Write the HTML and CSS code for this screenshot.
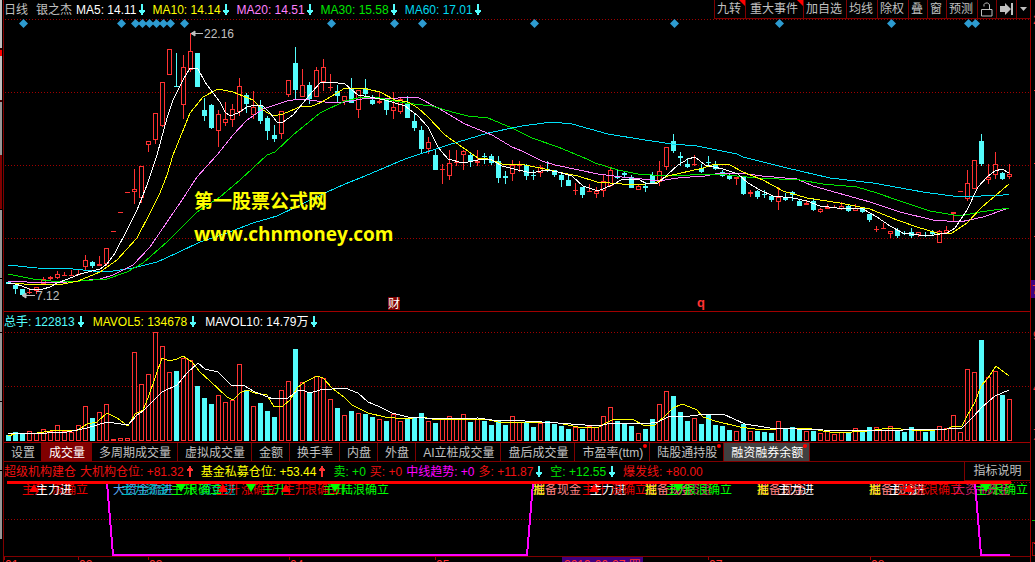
FILE: index.html
```html
<!DOCTYPE html>
<html lang="zh-CN">
<head>
<meta charset="utf-8">
<title>银之杰 日线</title>
<link rel="stylesheet" href="styles.css">
</head>
<body>
<svg class="defs" width="0" height="0" aria-hidden="true">
  <symbol id="down" viewBox="0 0 6 11"><path fill="#54fcfc" d="M2 0h2v6h2v2H5v1H4v2H2V9H1V8H0V6h2z"/></symbol>
  <symbol id="up" viewBox="0 0 6 11"><path fill="#ff3232" d="M2 0h2v2h1v1h1v2H4v6H2V5H0V3h1V2h1z"/></symbol>
</svg>
<div class="terminal">
  <aside class="scroll-edge"></aside>
  <main class="panels">
    <header class="row top">
      <div class="legend">
        <span class="grey">日线</span><span class="grey name">银之杰</span>
        <span class="item white">MA5: 14.11<svg class="arrow"><use href="#down"/></svg></span>
        <span class="item yellow">MA10: 14.14<svg class="arrow"><use href="#down"/></svg></span>
        <span class="item pink">MA20: 14.51<svg class="arrow"><use href="#down"/></svg></span>
        <span class="item green">MA30: 15.58<svg class="arrow"><use href="#down"/></svg></span>
        <span class="item cyan">MA60: 17.01<svg class="arrow"><use href="#down"/></svg></span>
      </div>
      <nav class="toolbar">
        <button class="flag">九转</button><button class="flag wide">重大事件</button><button>加自选</button><button>均线</button><button>除权</button><button>叠</button><button>窗</button><button>预测</button>
        <button class="icon" aria-label="锁定"><svg width="12" height="15"><path fill="none" stroke="#c0c0c0" d="M.5 7.500h10.500v6.500H.5zM3 4.500V2.500l1.500-1.500h2l2 1.500v5"/></svg></button>
        <button class="icon" aria-label="移到末尾"><svg width="13" height="12"><path fill="#c0c0c0" d="M0 3h5V0l6 6-6 6V9H0zM11 0h2v12h-2z"/></svg></button>
        <button class="icon small" aria-label="更多"><svg width="7" height="4"><path fill="#c0c0c0" d="M0 0h7L3.500 4z"/></svg></button>
      </nav>
    </header>
    <svg class="chart price" id="price"></svg>
    <section class="volume">
      <div class="row legend loose">
        <span class="item aqua">总手: 122813<svg class="arrow"><use href="#down"/></svg></span>
        <span class="item yellow">MAVOL5: 134678<svg class="arrow"><use href="#down"/></svg></span>
        <span class="item white">MAVOL10: 14.79万<svg class="arrow"><use href="#down"/></svg></span>
      </div>
      <svg class="chart bars" id="volume"></svg>
    </section>
    <nav class="tabs">
      <button>设置</button><button class="active">成交量</button><button>多周期成交量</button><button>虚拟成交量</button><button>金额</button><button>换手率</button><button>内盘</button><button>外盘</button><button>AI立桩成交量</button><button>盘后成交量</button><button class="dot">市盈率(ttm)</button><button class="dot">陆股通持股</button><button class="chosen dot">融资融券余额</button>
    </nav>
    <div class="row indicator">
      <div class="readings">
        <span class="red">超级机构建仓</span>
        <span class="red">大机构仓位: +81.32<svg class="arrow"><use href="#up"/></svg></span>
        <span class="yellow after">基金私募仓位: +53.44<svg class="arrow"><use href="#up"/></svg></span>
        <span class="green after">卖: +0</span>
        <span class="red">买: +0</span>
        <span class="magenta">中线趋势: +0</span>
        <span class="red">多: +11.87<svg class="arrow"><use href="#down"/></svg></span>
        <span class="green after">空: +12.55<svg class="arrow"><use href="#down"/></svg></span>
        <span class="red after">爆发线: +80.00</span>
      </div>
      <button class="explain">指标说明</button>
    </div>
    <svg class="chart signal" id="signal"></svg>
    <svg class="chart dates" id="dates"></svg>
  </main>
  <svg class="scale" id="scale"></svg>
</div>
<script src="chart.js"></script>
</body>
</html>
```

FILE: styles.css
```css
* { box-sizing: border-box; }
body {
  margin: 0;
  background: #000;
  color: #c0c0c0;
  font: 12px/18px "Liberation Sans", "Noto Sans CJK SC", sans-serif;
  overflow: hidden;
}
.defs { position: absolute; }
.terminal {
  display: grid;
  grid-template-columns: 3px minmax(0, 1fr) 4px;
  height: 100vh;
  overflow: hidden;
}
.scroll-edge {
  width: 2px;
  background: linear-gradient(#c0c0c0 48px, #300 48px 50px, #f00 50px 56px, #c0c0c0 56px 100px,
    #400 100px 102px, #989898 102px 155px, #800000 155px 209px, #000 209px 210px,
    #989898 210px 278px, #000 278px 279px, #989898 279px 332px, #000 332px 333px,
    #989898 333px 401px, #000 401px 402px, #989898 402px 470px, #000 470px 471px,
    #989898 471px 539px, #000 539px);
}
.panels {
  display: flex;
  flex-direction: column;
  border-left: 1px solid #800000;
  border-right: 1px solid #a00000;
  overflow: hidden;
}
.row { display: flex; height: 19px; flex: none; white-space: nowrap; }
.top { justify-content: space-between; }
.legend { display: flex; align-items: center; overflow: hidden; }
.name { margin: 0 4px 0 8px; }
.item { margin-right: 8px; }
.loose .item { margin-right: 9px; }
.arrow { width: 6px; height: 11px; margin-left: 2px; vertical-align: -1px; }
.loose .arrow, .readings .arrow { margin-left: 3px; }
.grey { color: #c0c0c0; }
.white { color: #fff; }
.yellow { color: #ff0; }
.pink { color: #ff80ff; }
.green { color: #00e600; }
.cyan { color: #00d8f0; }
.aqua { color: #54fcfc; }
.red { color: #f01010; }
.magenta { color: #f0f; }

button {
  margin: 0;
  padding: 0;
  border: 0;
  background: none;
  color: #c0c0c0;
  font: inherit;
  white-space: nowrap;
}
.toolbar { display: flex; flex: none; border-bottom: 1px solid #800000; }
.toolbar button {
  position: relative;
  display: flex;
  align-items: center;
  padding: 0 4px 0 2px;
  border-left: 1px solid #800000;
}
.toolbar .wide { padding: 0 5px 0 4px; }
.toolbar .icon { padding: 0 3px; }
.toolbar .flag::after {
  content: "";
  position: absolute;
  top: 0;
  right: 0;
  border: 3px solid transparent;
  border-top-color: #f00;
  border-right-color: #f00;
}

.chart { display: block; width: 100%; flex: none; }
.price { height: 292px; }
.bars { height: 111px; }
.signal { height: 75px; }
.dates { height: 6px; border-top: 1px solid #800000; }
.volume { border-top: 1px solid #a00000; }
.scale { width: 4px; height: 100%; }

.tabs {
  display: flex;
  flex: none;
  height: 20px;
  border-top: 1px solid #a00000;
  border-bottom: 1px solid #800000;
}
.tabs button {
  position: relative;
  padding: 1px 6px 0 7px;
  border-right: 1px solid #800000;
}
.tabs .active { background: #800000; color: #fff; }
.tabs .chosen { background: #404040; color: #fff; }
.tabs .dot::after {
  content: "";
  position: absolute;
  top: 1px;
  right: 2px;
  width: 4px;
  height: 4px;
  border-radius: 2px;
  background: #f00;
}
.indicator { justify-content: space-between; }
.readings { display: flex; align-items: center; gap: 4px; overflow: hidden; }
.readings .after { margin-left: 4px; }
.explain {
  flex: none;
  width: 66px;
  border-left: 1px solid #800000;
  border-bottom: 1px solid #800000;
}

.candles, .lines { shape-rendering: crispEdges; }
.lines polyline { fill: none; }
.watermark { font-weight: 700; font-size: 19px; }
.watermark-url { font-family: "Open Sans", sans-serif; font-weight: 700; font-size: 19px; }
.mark { font-weight: 700; font-size: 13px; }
```

FILE: chart.js
```js
const NS = 'http://www.w3.org/2000/svg';
const UP = '#ff3232', DOWN = '#54fcfc', RULE = '#a00000';

function add(parent, tag, attrs, text) {
  const el = document.createElementNS(NS, tag);
  for (const k in attrs) el.setAttribute(k, attrs[k]);
  if (text) el.textContent = text;
  parent.appendChild(el);
  return el;
}
function panel(id, left, top) {
  return add(document.getElementById(id), 'g', { transform: `translate(${-left} ${-top})` });
}
function rect(g, x, y, w, h, fill) { add(g, 'rect', { x, y, width: w, height: h, fill }); }
function hollow(g, x, y, w, h, color) {
  add(g, 'rect', { x: x + 0.5, y: y + 0.5, width: w - 1, height: h - 1, fill: '#000', stroke: color });
}
function rule(g, y, from = 5, to = 3000) {
  add(g, 'line', { x1: from, x2: to, y1: y + 0.5, y2: y + 0.5, stroke: RULE, 'stroke-dasharray': '1 2' });
}
function line(g, points, stroke, width = 1) { add(g, 'polyline', { points, stroke, 'stroke-width': width }); }
function label(g, x, y, text, fill, cls = '') { add(g, 'text', { x, y, fill, class: cls }, text); }

// One entry per day: colour, high, body top, body bottom, low, top of volume bar
const days = `c 281 282 284 284 435;c 285 285 289 294 432;c 289 289 295 295 434;r 288 292 293 294 431;r 287 287 291 294 433
r 277 279 284 285 429;r 276 277 279 281 431;r 271 274 278 279 425;r 272 275 276 276 431;r 270 275 276 276 432
r 269 274 275 275 425;r 255 260 267 270 406;c 261 262 266 268 418;r 256 264 266 266 412;r 248 248 264 266 404
r 231 231 232 232 439;r 212 212 213 213 438;r 192 192 193 193 438;r 169 189 192 204 352;r 166 166 198 203 384
r 141 141 145 152 374;r 113 113 140 144 332;r 82 82 126 127 346;r 49 49 75 75 372;c 53 86 87 87 371
r 55 67 105 119 358;r 33 51 70 72 360;c 53 53 87 87 386;c 98 110 116 121 398;c 104 105 128 129 404
r 110 114 131 147 395;r 102 119 123 126 402;r 104 109 120 127 400;r 78 86 112 116 364;c 93 95 104 113 390
r 91 107 115 119 406;c 100 105 121 124 403;c 116 118 131 140 411;c 125 135 139 142 417;r 111 111 134 139 390
r 80 80 95 97 381;c 47 63 90 99 349;r 69 85 97 97 382;c 82 85 99 104 393;r 67 70 97 97 376
r 59 67 82 91 378;r 74 87 88 91 399;c 85 91 96 102 408;r 96 96 101 105 415;c 78 88 103 103 411
r 90 90 110 118 413;c 79 88 94 97 414;c 95 100 104 105 417;r 92 101 103 104 419;c 98 98 110 115 421
r 92 107 111 119 414;r 97 99 112 114 421;c 96 103 118 118 419;c 113 121 128 131 417;c 126 130 149 153 413
r 137 142 149 154 421;c 150 155 170 170 423;r 164 169 170 184 418;r 150 163 176 180 416;r 150 162 163 166 419
r 150 151 155 170 414;c 152 155 162 167 422;r 150 161 163 166 419;c 153 156 157 164 421;c 154 156 163 165 425
c 156 161 178 183 421;c 171 176 178 184 425;r 160 165 174 181 416;r 161 165 166 172 422;c 164 165 176 180 422
c 170 175 176 180 427;r 165 167 173 177 423;c 161 169 170 172 421;c 170 170 175 177 424;c 173 175 180 187 426
c 176 180 186 186 429;r 183 190 191 195 427;c 187 187 195 198 429;r 184 191 192 192 426;r 187 191 194 198 427
r 174 181 191 197 416;r 168 170 186 187 407;c 170 177 178 179 421;c 171 173 175 177 424;c 175 177 188 188 426
r 184 186 190 190 433;c 182 186 188 192 429;c 172 175 184 184 419;r 161 171 182 186 404;r 147 147 167 170 391
c 134 141 151 153 396;c 152 156 158 166 412;c 158 164 167 168 421;r 155 164 165 166 418;c 164 168 172 173 424
c 156 162 163 166 415;c 161 164 169 170 425;c 170 172 176 177 426;c 174 175 179 180 430;r 177 177 179 185 431
c 177 177 194 195 424;r 190 192 194 197 431;c 190 191 197 199 431;c 190 194 195 198 432;c 195 196 200 202 433
r 187 197 202 210 421;c 193 198 200 201 429;c 191 192 195 201 427;c 200 201 206 206 429;r 200 203 205 205 431
c 199 201 210 211 431;r 208 209 212 213 433;r 204 207 209 209 431;r 205 207 208 208 434;r 202 206 209 210 432
c 205 206 211 212 432;r 204 208 211 211 428;c 207 207 212 213 432;c 214 214 220 222 427;r 226 229 230 232 427
r 223 228 229 229 430;r 231 231 234 238 426;c 228 230 236 238 430;c 231 233 234 235 432;c 228 232 236 238 427
r 232 232 235 237 430;c 232 235 236 237 432;c 230 232 234 235 430;r 230 231 243 243 426;r 226 230 233 233 428
r 212 212 214 222 415;r 191 191 192 192 432;r 170 183 199 201 369;r 160 160 189 189 372;c 134 141 164 166 340
r 164 177 180 184 377;r 152 164 175 179 371;c 172 173 179 180 395;r 164 174 177 179 399`
  .split(/[;\n]/).map(s => s.trim().split(' ')).map(([k, ...n]) => [k, ...n.map(Number)]);
const dayX = i => 8 + 7 * i;

// Price panel
const price = panel('price', 4, 19);
let g = add(price, 'g', { class: 'candles' });
[19, 92, 165, 238].forEach(y => rule(g, y));
days.forEach(([kind, high, top, bottom, low], i) => {
  const x = dayX(i), color = kind === 'r' ? UP : DOWN;
  rect(g, x, high, 1, Math.max(1, low - high), color);
  if (kind === 'r' && bottom - top > 2) hollow(g, x - 2, top, 5, bottom - top, color);
  else rect(g, x - 2, top, 5, bottom - top, color);
});
// The bar on day 24 has a long wick above its close
rect(g, dayX(24), 53, 1, 34, DOWN);
[23, 121, 135, 142, 149, 156, 163, 170, 184, 331, 394, 422, 534, 674, 779, 891, 968, 975].forEach(x =>
  add(price, 'path', { d: `M${x + 0.5} 19l4.500 4.500-4.500 4.500-4.500-4.500z`, fill: '#2d9bd0' }));
g = add(price, 'g', { class: 'lines' });
line(g, '8,265 37,268 73,269 93,271 113,271 133,268 157,262 177,253 200,242 227,233 253,223 277,216 300,205 327,192 345,184 365,176 405,159 448,145 488,133 522,126 552,122 572,124 608,134 645,140 672,144 697,146 737,154 743,157 787,168 830,178 873,183 923,192 960,197 1003,195 1009,194', '#00e0f8');
line(g, '8,281 27,282 67,282 100,279 113,275 133,265 150,247 167,222 182,200 197,177 217,155 233,135 247,120 263,109 287,101 300,99 317,101 333,103 345,102 368,98 392,99 405,97 417,97 438,108 465,124 492,135 512,147 522,151 542,161 555,165 598,174 622,177 642,179 658,181 678,178 690,177 705,176 720,173 740,173 762,176 797,179 813,186 870,202 900,212 933,220 960,222 983,217 1009,208', '#ff80ff');
line(g, '8,274 33,279 60,282 80,281 107,279 127,272 143,263 167,242 197,212 220,197 240,180 267,155 275,152 293,135 320,113 345,101 362,97 380,98 405,103 432,106 452,112 468,116 488,118 512,128 532,138 558,147 587,159 595,163 618,170 638,174 665,176 690,175 717,174 757,178 800,180 823,184 857,187 877,193 897,200 930,211 960,216 980,212 1009,208', '#00e600');
line(g, '8,283 18,283 30,285 63,284 78,281 100,272 117,260 137,238 150,213 160,193 167,175 173,155 182,133 190,113 203,97 218,89 233,92 253,100 263,110 273,116 283,114 302,106 310,107 322,102 345,88 362,88 380,92 395,100 408,102 418,108 428,117 445,135 462,147 478,158 488,159 502,164 525,165 545,169 558,172 578,176 597,182 635,185 655,183 668,176 690,171 703,168 715,164 730,165 743,172 763,180 783,191 807,198 840,203 870,209 897,220 917,227 937,233 952,233 967,223 982,207 1009,184', '#ffff00');
line(g, '8,283 15,284 22,286 29,289 43,289 50,287 57,283 68,279 80,274 100,269 107,264 115,253 127,230 137,210 147,185 157,155 167,118 173,100 183,80 190,68 198,69 205,82 213,93 220,102 225,112 230,116 238,113 247,107 255,105 263,106 270,113 277,122 283,122 293,115 303,103 312,92 320,83 330,82 345,84 352,90 358,95 370,97 385,100 395,103 405,106 417,115 428,127 438,147 442,152 448,159 463,163 478,160 490,159 502,166 518,170 532,173 545,170 558,172 572,176 583,186 598,191 612,185 623,179 638,179 647,184 658,183 667,175 678,165 688,159 695,157 705,165 723,169 738,174 748,183 760,190 773,196 793,198 807,201 820,206 837,208 863,209 877,217 890,226 903,233 927,236 947,233 955,228 967,210 978,187 987,177 995,171 1002,169 1009,173', '#ffffff');
label(price, 194, 208, '第一股票公式网', '#ff0', 'watermark');
label(price, 194, 241, 'www.chnmoney.com', '#ff0', 'watermark-url');
add(price, 'path', { d: 'M191 33.500h12M195 31l-4 2.500 4 2.500zM22 295.500h13M26 293l-4 2.500 4 2.500z', stroke: '#c0c0c0', fill: '#c0c0c0' });
label(price, 204, 38, '22.16', '#c0c0c0');
label(price, 36, 300, '7.12', '#c0c0c0');
rect(price, 388, 297, 12, 13, '#800000');
label(price, 388, 308, '财', '#fff');
label(price, 697, 307, 'q', UP, 'mark');

// Volume panel
const volume = panel('volume', 4, 331);
g = add(volume, 'g', { class: 'candles' });
rule(g, 332);
rule(g, 386);
days.forEach(([kind, , , , , top], i) => {
  const x = dayX(i) - 2;
  if (kind === 'r') hollow(g, x, top, 5, 441 - top, UP);
  else rect(g, x, top, 5, 441 - top, DOWN);
});
g = add(volume, 'g', { class: 'lines' });
line(g, '8,436 15,434 37,433 57,430 78,430 87,424 97,422 107,413 117,418 128,426 135,414 143,410 148,398 155,378 162,358 169,361 177,359 183,356 192,362 200,372 210,381 227,397 233,400 240,393 247,390 255,393 267,395 274,407 283,406 290,400 297,388 305,382 317,376 323,378 332,388 345,398 352,405 368,413 385,417 405,419 422,417 432,419 462,419 485,419 498,422 525,422 558,423 578,427 597,428 612,420 632,419 645,426 655,425 665,416 673,408 682,404 690,407 697,410 703,417 715,421 740,427 762,430 790,428 807,428 823,431 837,433 867,431 890,428 923,431 947,429 953,426 962,426 967,416 975,402 981,386 988,378 996,366 1009,376', '#ffff00');
line(g, '8,433 27,434 67,432 87,428 107,422 128,425 137,415 143,411 162,392 177,385 187,373 198,363 205,369 218,372 232,386 243,385 255,392 273,399 288,398 297,391 302,390 310,393 320,390 345,388 358,393 368,402 380,407 392,413 408,417 425,418 435,419 478,418 492,420 525,421 558,423 598,426 612,423 645,424 658,422 668,417 690,416 707,414 723,414 745,424 770,428 823,430 877,431 903,430 947,429 962,428 973,417 982,407 995,396 1009,390', '#ffffff');

// Signal panel
const signal = panel('signal', 4, 481);
g = add(signal, 'g', { class: 'lines' });
rule(g, 482, 1011);
rule(g, 519);
const RED = '#e80000', GREEN = '#00ff00', PINK = '#ff8080', BLUE = '#58a8f0', TEAL = '#00b8b8', ROSE = '#d02070';
[
  [22, '主升', RED], [52, '浪确立', RED], [36, '主力进', '#fff'],
  [113, '大资金流进', BLUE], [121, '主力资金', TEAL],
  [171, '主升', GREEN], [200, '资金进', TEAL], [186, '浪确立', GREEN],
  [216, '主升', RED], [241, '涨确立', RED], [262, '主升', GREEN], [283, '主升', RED], [305, '浪确立', RED],
  [323, '主升', GREEN], [353, '浪确立', GREEN], [341, '陆', GREEN],
  [533, '准备现金', PINK], [533, '掘', '#ff0'], [582, '主升', RED], [590, '主力进', '#fff'], [611, '浪确立', RED],
  [645, '准备现金', PINK], [645, '掘', '#ff0'], [676, '大资金', ROSE], [666, '主升', GREEN], [684, '浪', GREEN], [696, '浪确立', GREEN],
  [757, '准备现金', PINK], [757, '掘', '#ff0'], [778, '主力进', '#fff'],
  [869, '准备现金', PINK], [869, '掘', '#ff0'], [889, '主力进', '#fff'], [898, '主升', RED], [926, '浪确立', RED], [916, '涨', RED],
  [953, '大资金', ROSE], [975, '主升', GREEN], [986, '资金', ROSE], [992, '浪确立', GREEN]
].forEach(([x, text, color]) => label(signal, x, 494, text, color));
[34, 223, 286, 594, 909].forEach(x => add(signal, 'path', { d: `M${x} 484l5 8h-10z`, fill: '#f00' }));
[181, 251, 335, 678, 986].forEach(x => add(signal, 'path', { d: `M${x} 492l5-8h-10z`, fill: '#0f0' }));
g = add(signal, 'g', { class: 'lines' });
line(g, '107,483 113,555 527,555 533,483', '#ff00ff', 2);
line(g, '975,483 981,555 1010,555', '#ff00ff', 2);
rect(g, 7, 481, 1004, 3, '#f00');

// Date axis
const dates = panel('dates', 4, 557);
[[4, '01'], [78, '02'], [148, '03'], [289, '04'], [435, '05'], [708, '07'], [870, '08']].forEach(([x, text]) => {
  rect(dates, x, 557, 1, 3, RULE);
  label(dates, x + 1, 569, text, UP);
});
rect(dates, 562, 557, 81, 6, '#400080');
label(dates, 564, 569, '2019-06-27 四', UP);

// Price scale at the right edge
const scale = panel('scale', 1031, 0);
[[24, '22'], [340, '9'], [392, '4'], [439, '万']].forEach(([y, text]) => label(scale, 1033, y, text, UP));
[90, 163, 236].forEach(y => rect(scale, 1034, y, 1, 1, UP));
rect(scale, 1031, 280, 4, 18, '#400080');
label(scale, 1032, 294, '7', UP);
rect(scale, 1032, 520, 3, 1, '#00c000');
hollow(scale, 1032, 542, 6, 14, RULE);
label(scale, 1033, 553, '百', UP);
```
